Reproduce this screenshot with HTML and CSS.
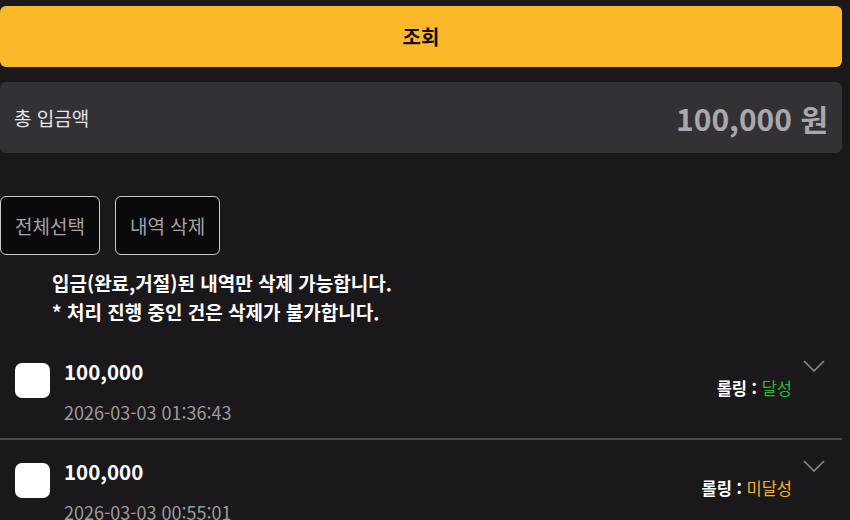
FILE: index.html
```html
<!DOCTYPE html>
<html lang="ko">
<head>
  <meta charset="UTF-8">
  <meta name="viewport" content="width=device-width, initial-scale=1.0">
  <title>입금 내역</title>
  <link rel="stylesheet" href="styles.css">
</head>
<body>
  <div class="page">
    <button class="search-btn">조회</button>

    <div class="total-box">
      <span class="total-label">총 입금액</span>
      <span class="total-value">100,000 원</span>
    </div>

    <div class="actions">
      <button class="action-btn">전체선택</button>
      <button class="action-btn">내역 삭제</button>
    </div>

    <div class="notice">
      <p>입금(완료,거절)된 내역만 삭제 가능합니다.</p>
      <p>* 처리 진행 중인 건은 삭제가 불가합니다.</p>
    </div>

    <ul class="history">
      <li class="history-item">
        <span class="check"></span>
        <div class="info">
          <div class="amount">100,000</div>
          <div class="date">2026-03-03 01:36:43</div>
        </div>
        <div class="side">
          <svg class="chevron" width="22" height="12" viewBox="0 0 22 12">
            <polyline points="1,1 11,11 21,1" fill="none" stroke="#8a898c" stroke-width="1.6"/>
          </svg>
          <div class="rolling">롤링 : <span class="done">달성</span></div>
        </div>
      </li>
      <li class="history-item">
        <span class="check"></span>
        <div class="info">
          <div class="amount">100,000</div>
          <div class="date">2026-03-03 00:55:01</div>
        </div>
        <div class="side">
          <svg class="chevron" width="22" height="12" viewBox="0 0 22 12">
            <polyline points="1,1 11,11 21,1" fill="none" stroke="#8a898c" stroke-width="1.6"/>
          </svg>
          <div class="rolling">롤링 : <span class="pending">미달성</span></div>
        </div>
      </li>
    </ul>
  </div>
</body>
</html>
```

FILE: styles.css
```css
body {
  margin: 0;
  background: #1a181b;
  font-family: "Noto Sans CJK KR", "Noto Sans", sans-serif;
  color: #ffffff;
  overflow: hidden;
}

.page {
  padding: 6px 8px 0 0;
}

.search-btn {
  display: block;
  width: 100%;
  height: 61px;
  border: none;
  border-radius: 6px;
  background: #fbb829;
  color: #111;
  font-family: inherit;
  font-size: 20px;
  font-weight: 700;
}

.total-box {
  display: flex;
  align-items: center;
  justify-content: space-between;
  height: 71px;
  margin-top: 15px;
  padding: 0 14px;
  background: #333135;
  border-radius: 6px;
}

.total-label {
  font-size: 19px;
  color: #e6e5e7;
}

.total-value {
  font-size: 30px;
  font-weight: 700;
  color: #a9a8ab;
}

.actions {
  display: flex;
  gap: 15px;
  margin-top: 43px;
}

.action-btn {
  height: 59px;
  padding: 0 14px;
  background: #0a090b;
  border: 1px solid #c9c8ca;
  border-radius: 6px;
  color: #a5a4a7;
  font-family: inherit;
  font-size: 19px;
}

.notice {
  margin-top: 13px;
  padding-left: 52px;
  font-size: 19px;
  font-weight: 700;
  line-height: 29px;
}

.notice p {
  margin: 0;
}

.history {
  list-style: none;
  margin: 14px 0 0;
  padding: 0;
}

.history-item {
  display: flex;
  align-items: flex-start;
  height: 82px;
  padding: 16px 0 0 15px;
  border-bottom: 2px solid #4a494c;
}

.check {
  width: 35px;
  height: 35px;
  margin-top: 7px;
  background: #ffffff;
  border-radius: 7px;
  flex-shrink: 0;
}

.info {
  margin-left: 14px;
  flex: 1;
}

.amount {
  font-size: 20.5px;
  font-weight: 700;
  line-height: 30px;
}

.date {
  margin-top: 15px;
  font-size: 18px;
  color: #9c9b9e;
  line-height: 22px;
}

.side {
  display: flex;
  flex-direction: column;
  align-items: flex-end;
  margin-top: 4px;
  margin-right: 17px;
}

.chevron {
  display: block;
}

.rolling {
  margin-top: 5px;
  margin-right: 33px;
  font-size: 16.5px;
  font-weight: 700;
  line-height: 22px;
}

.done {
  color: #2fb82f;
  font-weight: 400;
}

.pending {
  color: #f0b429;
  font-weight: 400;
}
```
